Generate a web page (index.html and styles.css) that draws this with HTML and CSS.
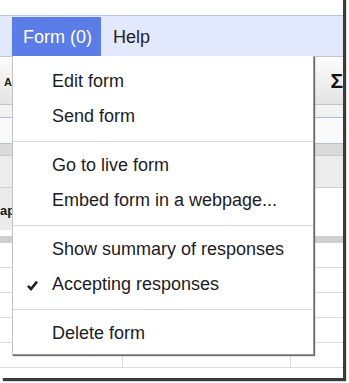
FILE: index.html
```html
<!DOCTYPE html>
<html>
<head>
<meta charset="utf-8">
<link rel="stylesheet" href="styles.css">
</head>
<body>
<div class="frame">
  <div class="top-space"></div>
  <div class="menubar">
    <div class="mb-item active">Form (0)</div>
    <div class="mb-item">Help</div>
  </div>
  <div class="sheet">
    <div class="line l-c6"></div>
    <div class="toolbar">
      <span class="tb-a">A</span>
      <span class="tb-sigma">Σ</span>
    </div>
    <div class="line l-c4"></div>
    <div class="band b-105"></div>
    <div class="line l-blue"></div>
    <div class="band b-formula"></div>
    <div class="line l-blue2"></div>
    <div class="band b-colhead"></div>
    <div class="line l-c8"></div>
    <div class="band b-tabs"></div>
    <div class="line l-d0"></div>
    <div class="band b-white"><span class="tab-cell"><span class="tab-text">ap</span></span></div>
    <div class="band b-gray"></div>
    <div class="grid">
      <div class="row"><div class="cell c1"></div><div class="cell c2"></div><div class="cell c3"></div></div>
      <div class="row"><div class="cell c1"></div><div class="cell c2"></div><div class="cell c3"></div></div>
      <div class="row"><div class="cell c1"></div><div class="cell c2"></div><div class="cell c3"></div></div>
      <div class="row"><div class="cell c1"></div><div class="cell c2"></div><div class="cell c3"></div></div>
      <div class="row"><div class="cell c1"></div><div class="cell c2"></div><div class="cell c3"></div></div>
    </div>
  </div>

  <div class="menu">
    <div class="item"><span class="slot"></span>Edit form</div>
    <div class="item"><span class="slot"></span>Send form</div>
    <div class="sep"></div>
    <div class="item"><span class="slot"></span>Go to live form</div>
    <div class="item"><span class="slot"></span>Embed form in a webpage...</div>
    <div class="sep"></div>
    <div class="item"><span class="slot"></span>Show summary of responses</div>
    <div class="item"><span class="slot"><svg class="check" width="11" height="11" viewBox="0 0 11 11"><polyline points="1,5.8 4,9 10,1.6" fill="none" stroke="#1e1e1e" stroke-width="2.6" stroke-linejoin="miter" stroke-linecap="butt"/></svg></span>Accepting responses</div>
    <div class="sep"></div>
    <div class="item"><span class="slot"></span>Delete form</div>
  </div>
</div>
</body>
</html>
```

FILE: styles.css
```css
html, body {
  margin: 0;
  padding: 0;
  background: #ffffff;
}
body {
  width: 349px;
  height: 383px;
  overflow: hidden;
  font-family: "Liberation Sans", Arial, sans-serif;
}
.frame {
  position: relative;
  width: 343px;
  height: 381px;
  margin-top: -3px;
  background: #ffffff;
  overflow: hidden;
  box-shadow: 3px 3px 1px #3a3a3a;
}
.top-space {
  height: 18px;
}
.menubar {
  height: 40px;
  border-top: 1px solid #b4c5f2;
  background: #e2e9fd;
  display: flex;
  align-items: flex-end;
  padding-left: 12px;
}
.mb-item {
  height: 39px;
  line-height: 41px;
  font-size: 18px;
  color: #1e1e2a;
  padding: 0 12px;
}
.mb-item.active {
  background: #5b7de8;
  color: #ffffff;
  padding: 0 9px 0 11px;
}
.sheet {
  display: flex;
  flex-direction: column;
}
.line { height: 1px; }
.l-c6 { background: #c6c6c6; }
.l-c4 { background: #c4c4c4; }
.l-blue { background: #a9badb; }
.l-blue2 { background: #b5c1d8; }
.l-c8 { background: #c8c8c8; }
.l-d0 { background: #d0d0d0; }
.toolbar {
  height: 47px;
  background: linear-gradient(#fcfcfc, #e4e4e4);
  display: flex;
  align-items: center;
  justify-content: space-between;
  padding: 0 0 0 4px;
}
.tb-a {
  font-size: 11px;
  font-weight: bold;
  color: #222;
  margin-top: 2px;
}
.tb-sigma {
  font-size: 21px;
  font-weight: bold;
  color: #111;
  margin-right: 0;
  margin-top: 1px;
}
.band { flex: none; }
.b-105 { height: 12px; background: #f2f2f2; }
.b-formula { height: 25px; background: #fafafa; }
.b-colhead { height: 11px; background: #dadada; }
.b-tabs {
  height: 31px;
  background: #ececec;
}
.b-white {
  height: 48px;
  background: #ffffff;
  display: flex;
}
.tab-cell {
  width: 60px;
  height: 42px;
  background: #ebebeb;
  display: flex;
  align-items: center;
}
.tab-text {
  font-size: 13px;
  font-weight: bold;
  color: #1a1a1a;
  margin-left: 0;
  margin-top: 2px;
}
.b-gray { height: 7px; background: #cfcfcf; }
.grid {
  display: flex;
  flex-direction: column;
}
.row {
  display: flex;
  height: 24px;
  border-bottom: 1px solid #dcdcdc;
}
.cell { height: 24px; }
.c1 { width: 122px; border-right: 1px solid #dcdcdc; }
.c2 { width: 167px; border-right: 1px solid #dcdcdc; }
.c3 { flex: 1; }

.menu {
  position: absolute;
  left: 12px;
  top: 59px;
  width: 302px;
  box-sizing: border-box;
  background: #ffffff;
  border-left: 1px solid #c4c4c4;
  border-right: 1px solid #9a9a9a;
  border-bottom: 1px solid #9a9a9a;
  box-shadow: 1px 1px 1px #6a6a6a;
  padding: 8px 0 3px 0;
}
.item {
  display: flex;
  align-items: center;
  height: 35px;
  line-height: 35px;
  font-size: 18px;
  color: #1c1c24;
  white-space: nowrap;
}
.slot {
  width: 39px;
  flex: none;
  display: flex;
  align-items: center;
  padding-left: 14px;
  box-sizing: border-box;
  height: 35px;
}
.check {
  display: block;
  margin-top: 1px;
}
.sep {
  height: 1px;
  background: #d8d8d8;
  margin: 7px 0 6px 0;
}
```
